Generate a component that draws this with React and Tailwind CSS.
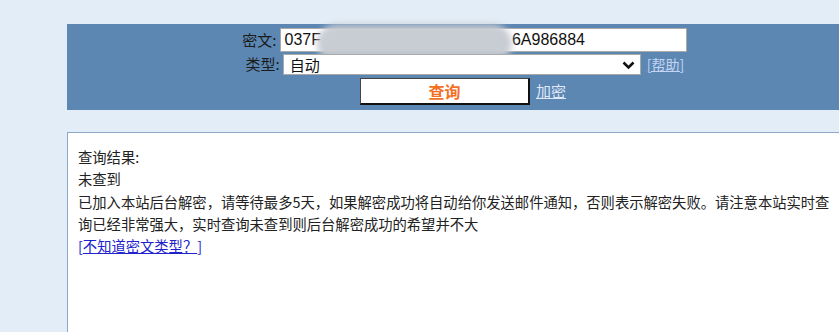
import React from 'react';

const cjk = { fontFamily: '"Noto Sans CJK SC", "Noto Sans", sans-serif' };
const mono = { fontFamily: '"Liberation Sans", "Noto Sans CJK SC", sans-serif' };

const App = () => {
  return (
    <div className="w-[839px] h-[332px] overflow-hidden bg-[#e2edf7]" style={cjk}>
      <div className="pl-[67px] pt-[24px] w-[855px]">
        {/* Query panel */}
        <div className="w-[788px] h-[86px] bg-[#5c87b3] flex flex-col items-center pt-[4px]">
          <div className="flex items-center h-[24px]">
            <span className="text-[15px] text-[#1b1b1b] w-[44px] text-right pr-[3px]">密文:</span>
            <div className="relative w-[407px] h-[24px] bg-white border border-[#a9a9a9] flex items-center pl-[4px]">
              <span className="text-[16px] text-[#111] leading-none whitespace-nowrap" style={mono}>
                037F<span className="inline-block w-[191px]" />6A986884
              </span>
              <div className="absolute left-[36px] top-[-5px] w-[195px] h-[39px] rounded-[20px] bg-[#c6cad1] blur-[3px] opacity-95" />
            </div>
          </div>
          <div className="flex items-center h-[22px] mt-[1px]">
            <span className="text-[15px] text-[#1b1b1b] w-[45px] text-right pr-[3px]">类型:</span>
            <div className="relative w-[358px] h-[21px] bg-white border border-[#a9a9a9] flex items-center pl-[6px]">
              <span className="text-[15px] text-[#111] leading-none">自动</span>
              <svg className="absolute right-[5px] top-[5px]" width="13" height="10" viewBox="0 0 13 10">
                <path d="M1.5 2.5 L6.5 7.5 L11.5 2.5" fill="none" stroke="#111" strokeWidth="2.6" />
              </svg>
            </div>
            <a className="ml-[6px] text-[14px] text-[#c4d4f2] underline decoration-[#c4d4f2]">[帮助]</a>
          </div>
          <div className="flex items-center mt-[3px] pl-[4px]">
            <button className="w-[170px] h-[27px] bg-white border-t border-l border-[#444] border-r-2 border-b-2 border-r-[#111] border-b-[#111] text-[16px] font-bold text-[#f3701f]">
              查询
            </button>
            <a className="ml-[6px] text-[15px] text-[#dfe8f8] underline">加密</a>
          </div>
        </div>

        {/* Result box */}
        <div className="mt-[22px] w-[788px] h-[240px] bg-white border border-[#8ea9c7] pl-[10px] pt-[13px] text-[14.3px] leading-[22.3px] text-[#222]">
          <div>查询结果:</div>
          <div>未查到</div>
          <div className="w-[760px]">
            已加入本站后台解密，请等待最多5天，如果解密成功将自动给你发送邮件通知，否则表示解密失败。请注意本站实时查询已经非常强大，实时查询未查到则后台解密成功的希望并不大
          </div>
          <div className="text-[#2222cc]">
            [<span className="underline">不知道密文类型？</span>]
          </div>
        </div>
      </div>
    </div>
  );
};

export default App;
